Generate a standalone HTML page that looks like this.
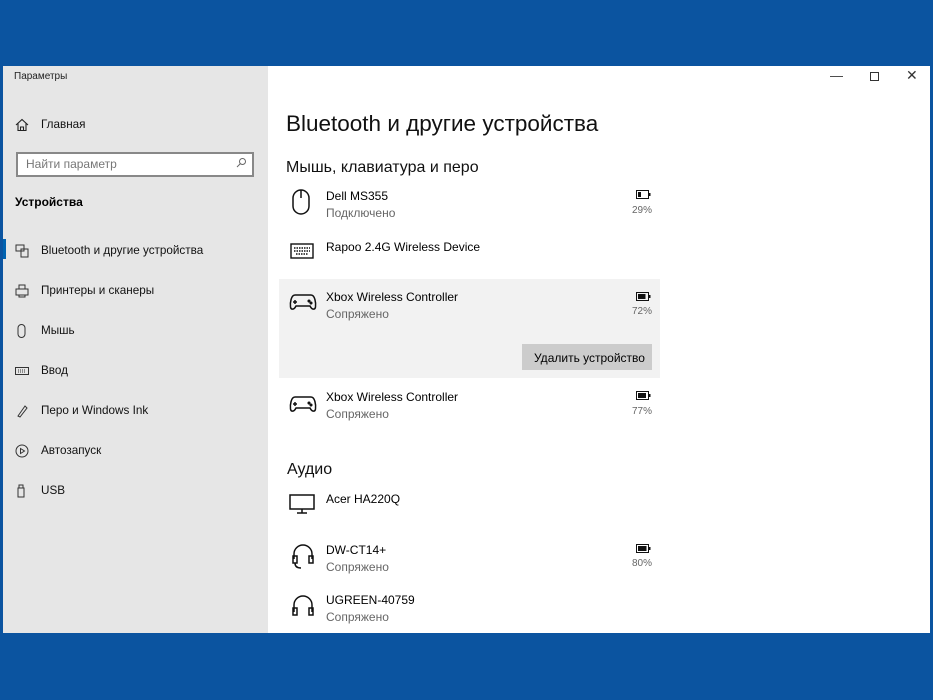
<!DOCTYPE html>
<html><head><meta charset="utf-8"><style>
*{margin:0;padding:0;box-sizing:border-box}
body{width:933px;height:700px;background:#0b54a0;position:relative;overflow:hidden;font-family:"Liberation Sans",sans-serif;color:#000}
#win{position:absolute;left:3px;top:66px;width:927px;height:567px;background:#fff}
#side{position:absolute;left:0;top:0;width:265px;height:567px;background:#e6e6e6}
.t{position:absolute;white-space:nowrap}
.nav{position:absolute;left:12px;font-size:11.7px;color:#111}
.nav svg{position:absolute;left:0;top:0}
.nav span{position:absolute;left:26px;top:0;white-space:nowrap}
.sub{color:#666;font-size:12px}
.pct{font-size:10px;color:#666}
</style></head><body>
<div id="win">
<div id="side">
<div class="t" style="left:11px;top:5px;font-size:10px;color:#222">Параметры</div>
<div class="nav" style="top:52px"><svg width="14" height="14" viewBox="0 0 14 14" fill="none" stroke="#222" stroke-width="1.1"><path d="M1 7L7 1.5 13 7M3 5.5V12.5H11V5.5M5.5 12.5V9H8.5V12.5"/></svg><span>Главная</span></div>
<div style="position:absolute;left:13px;top:86px;width:238px;height:25px;border:2px solid #888;background:#fff"></div>
<div class="t" style="left:23px;top:91px;font-size:12px;color:#777">Найти параметр</div>
<svg style="position:absolute;left:232px;top:91px" width="12" height="12" viewBox="0 0 12 12" fill="none" stroke="#666"><circle cx="7.5" cy="4.5" r="3"/><path d="M5.5 6.5L2 10"/></svg>
<div class="t" style="left:12px;top:129px;font-size:12px;font-weight:bold">Устройства</div>
<div style="position:absolute;left:0;top:173px;width:3px;height:20px;background:#0063b1"></div>
<div class="nav" style="top:178px"><svg width="15" height="14" viewBox="0 0 15 14" fill="none" stroke="#333"><rect x="1" y="1" width="8" height="6"/><rect x="6" y="5" width="7" height="8"/></svg><span>Bluetooth и другие устройства</span></div>
<div class="nav" style="top:218px"><svg width="15" height="14" viewBox="0 0 15 14" fill="none" stroke="#333"><rect x="1" y="5" width="12" height="6"/><path d="M4 5V1H10V5M4 11V13H10V11"/></svg><span>Принтеры и сканеры</span></div>
<div class="nav" style="top:258px"><svg width="15" height="14" viewBox="0 0 15 14" fill="none" stroke="#333"><rect x="3" y="0.5" width="7" height="13" rx="3.5"/></svg><span>Мышь</span></div>
<div class="nav" style="top:298px"><svg width="15" height="14" viewBox="0 0 15 14" fill="none" stroke="#333"><rect x="0.5" y="3.5" width="13" height="7"/><path d="M3 6h8M3 8h8" stroke-dasharray="1 1"/></svg><span>Ввод</span></div>
<div class="nav" style="top:338px"><svg width="15" height="14" viewBox="0 0 15 14" fill="none" stroke="#333"><path d="M3 12L10 2 12 4 5 13Z"/></svg><span>Перо и Windows Ink</span></div>
<div class="nav" style="top:378px"><svg width="15" height="14" viewBox="0 0 15 14" fill="none" stroke="#333"><circle cx="7" cy="7" r="6"/><path d="M5.5 4.5L9.5 7 5.5 9.5Z"/></svg><span>Автозапуск</span></div>
<div class="nav" style="top:418px"><svg width="15" height="14" viewBox="0 0 15 14" fill="none" stroke="#333"><rect x="3" y="4" width="6" height="9"/><rect x="4" y="1" width="4" height="3"/></svg><span>USB</span></div>
</div>
<div class="t" style="left:827px;top:2px;font-size:13px;color:#333">—</div>
<div style="position:absolute;left:867px;top:6px;width:9px;height:9px;border:1px solid #333"></div>
<div class="t" style="left:903px;top:1px;font-size:14px;color:#333">✕</div>
<div class="t" style="left:283px;top:45px;font-size:22.5px;color:#111">Bluetooth и другие устройства</div>
<div class="t" style="left:283px;top:93px;font-size:16px;color:#111">Мышь, клавиатура и перо</div>
<div style="position:absolute;left:276px;top:213px;width:381px;height:99px;background:#f2f2f2"></div>
<div style="position:absolute;left:519px;top:278px;width:130px;height:26px;background:#ccc"></div>
<div class="t" style="left:531px;top:285px;font-size:12px">Удалить устройство</div>

<svg style="position:absolute;left:288px;top:122px" width="20" height="28" viewBox="0 0 20 28" fill="none" stroke="#111" stroke-width="1.5"><rect x="2" y="2" width="16" height="24" rx="8"/><path d="M10 2V10"/></svg>
<div class="t" style="left:323px;top:123px;font-size:12px">Dell MS355</div><div class="t sub" style="left:323px;top:140px">Подключено</div>
<svg style="position:absolute;left:287px;top:177px" width="24" height="16" viewBox="0 0 24 16" fill="none" stroke="#111" stroke-width="1.4"><rect x="1" y="1" width="22" height="14"/><path d="M4 5h16M4 8h16M6 11h12" stroke-dasharray="1.5 1"/></svg>
<div class="t" style="left:323px;top:174px;font-size:12px">Rapoo 2.4G Wireless Device</div>

<svg style="position:absolute;left:286px;top:227px" width="28" height="18" viewBox="0 0 28 18" fill="none" stroke="#111" stroke-width="1.5"><path d="M6 2H22C26 2 27 10 26.5 14 26 17 23 17 21 13H7C5 17 2 17 1.5 14 1 10 2 2 6 2Z"/><path d="M6 7v4M4 9h4"/><circle cx="20" cy="8" r=".8"/><circle cx="22" cy="10" r=".8"/></svg>
<div class="t" style="left:323px;top:224px;font-size:12px">Xbox Wireless Controller</div><div class="t sub" style="left:323px;top:241px">Сопряжено</div>
<svg style="position:absolute;left:286px;top:329px" width="28" height="18" viewBox="0 0 28 18" fill="none" stroke="#111" stroke-width="1.5"><path d="M6 2H22C26 2 27 10 26.5 14 26 17 23 17 21 13H7C5 17 2 17 1.5 14 1 10 2 2 6 2Z"/><path d="M6 7v4M4 9h4"/><circle cx="20" cy="8" r=".8"/><circle cx="22" cy="10" r=".8"/></svg>
<div class="t" style="left:323px;top:324px;font-size:12px">Xbox Wireless Controller</div><div class="t sub" style="left:323px;top:341px">Сопряжено</div>

<div class="t" style="left:284px;top:395px;font-size:16px;color:#111">Аудио</div>
<svg style="position:absolute;left:286px;top:428px" width="26" height="20" viewBox="0 0 26 20" fill="none" stroke="#111" stroke-width="1.5"><rect x="1" y="1" width="24" height="14"/><path d="M13 15V19M8 19H18"/></svg>
<div class="t" style="left:323px;top:426px;font-size:12px">Acer HA220Q</div>
<svg style="position:absolute;left:288px;top:476px" width="24" height="28" viewBox="0 0 24 28" fill="none" stroke="#111" stroke-width="1.5"><path d="M3 17V12A9 9 0 0 1 21 12V17"/><rect x="2" y="14" width="4" height="7"/><rect x="18" y="14" width="4" height="7"/><path d="M4 21Q4 26 10 26"/></svg>
<div class="t" style="left:323px;top:477px;font-size:12px">DW-CT14+</div><div class="t sub" style="left:323px;top:494px">Сопряжено</div>
<svg style="position:absolute;left:288px;top:527px" width="24" height="24" viewBox="0 0 24 24" fill="none" stroke="#111" stroke-width="1.5"><path d="M3 19V12A9 9 0 0 1 21 12V19"/><rect x="2" y="15" width="4" height="7"/><rect x="18" y="15" width="4" height="7"/></svg>
<div class="t" style="left:323px;top:527px;font-size:12px">UGREEN-40759</div><div class="t sub" style="left:323px;top:544px">Сопряжено</div>

<svg style="position:absolute;left:633px;top:124px" width="15" height="9" viewBox="0 0 15 9"><rect x=".5" y=".5" width="12" height="8" fill="none" stroke="#111"/><rect x="13" y="3" width="1.5" height="3" fill="#111"/><rect x="2" y="2" width="3" height="5" fill="#111"/></svg>
<div class="t pct" style="left:629px;top:139px">29%</div>
<svg style="position:absolute;left:633px;top:226px" width="15" height="9" viewBox="0 0 15 9"><rect x=".5" y=".5" width="12" height="8" fill="none" stroke="#111"/><rect x="13" y="3" width="1.5" height="3" fill="#111"/><rect x="2" y="2" width="7.5" height="5" fill="#111"/></svg>
<div class="t pct" style="left:629px;top:240px">72%</div>
<svg style="position:absolute;left:633px;top:325px" width="15" height="9" viewBox="0 0 15 9"><rect x=".5" y=".5" width="12" height="8" fill="none" stroke="#111"/><rect x="13" y="3" width="1.5" height="3" fill="#111"/><rect x="2" y="2" width="8" height="5" fill="#111"/></svg>
<div class="t pct" style="left:629px;top:340px">77%</div>
<svg style="position:absolute;left:633px;top:478px" width="15" height="9" viewBox="0 0 15 9"><rect x=".5" y=".5" width="12" height="8" fill="none" stroke="#111"/><rect x="13" y="3" width="1.5" height="3" fill="#111"/><rect x="2" y="2" width="8.5" height="5" fill="#111"/></svg>
<div class="t pct" style="left:629px;top:492px">80%</div>
</div>
</body></html>
